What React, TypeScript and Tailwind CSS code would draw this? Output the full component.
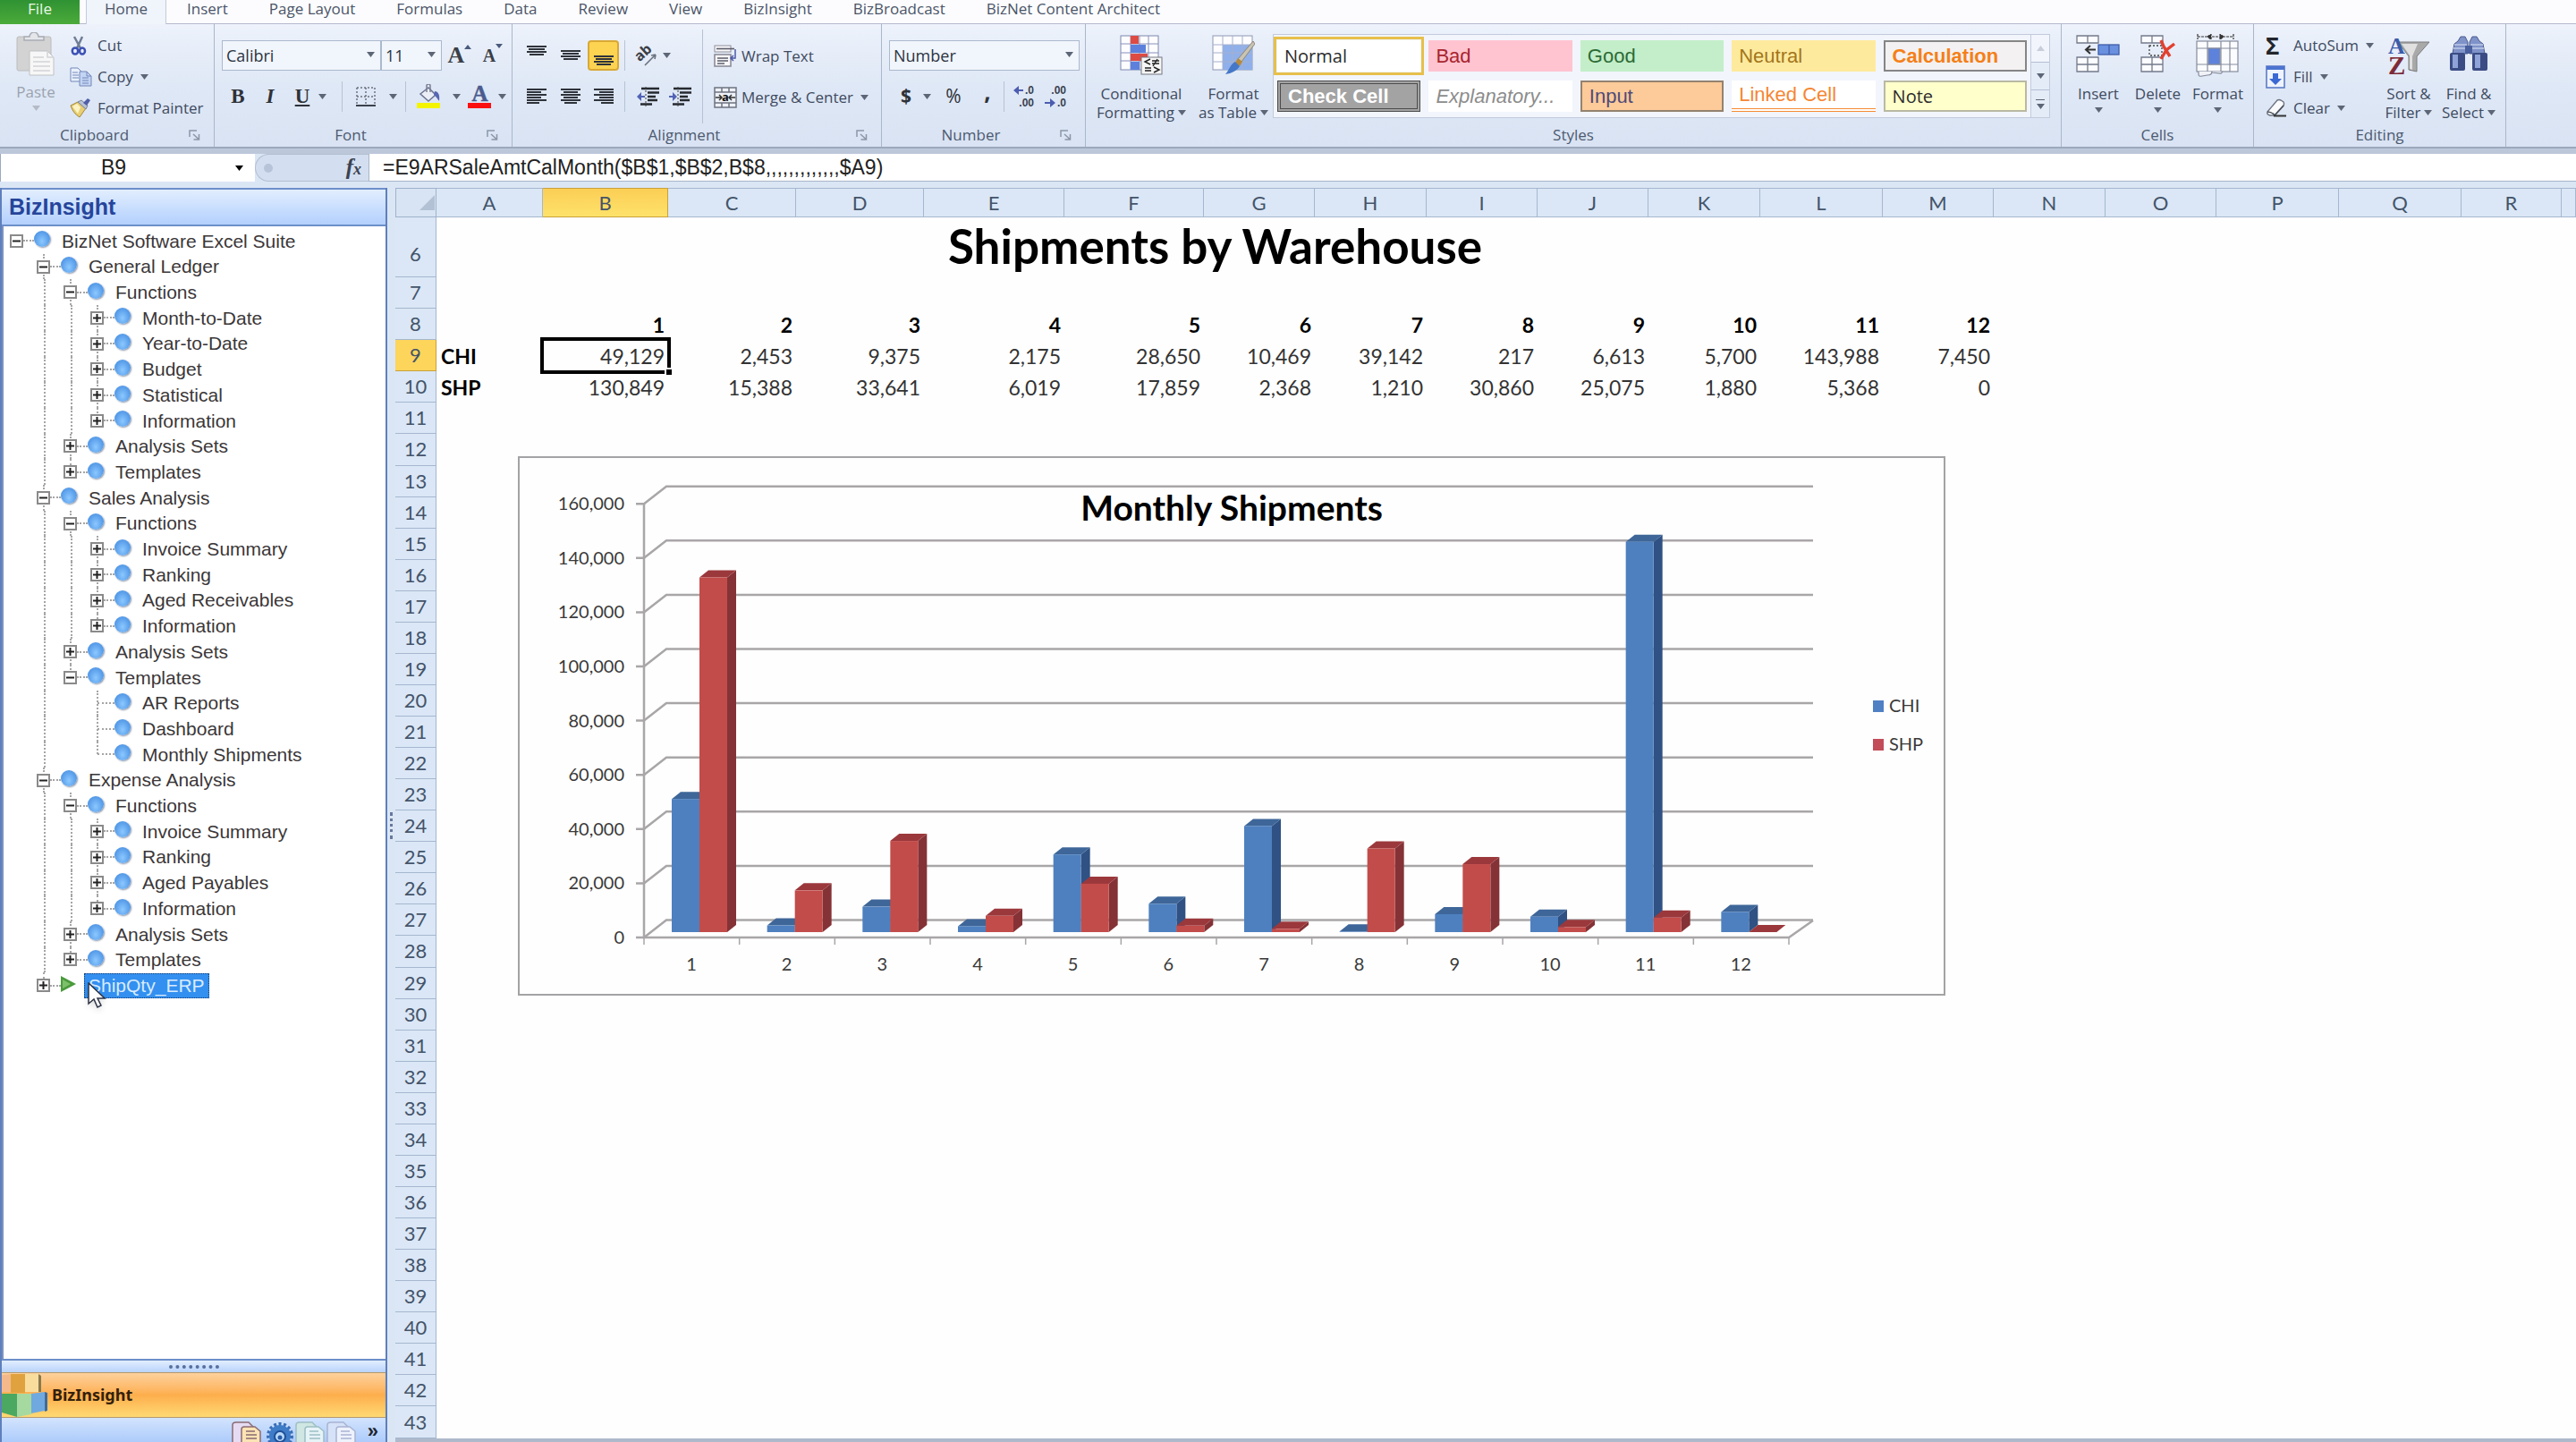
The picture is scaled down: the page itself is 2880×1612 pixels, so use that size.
import { Fragment, useState } from "react";
import type { ReactNode } from "react";

type TreeNode = {
  label: string;
  leaf?: boolean;
  script?: boolean;
  children?: TreeNode[];
};
type TreeRow = {
  node: TreeNode;
  level: number;
  rails: boolean[];
  last: boolean;
};

const tree: TreeNode = {
  label: "BizNet Software Excel Suite",
  children: [
    {
      label: "General Ledger",
      children: [
        {
          label: "Functions",
          children: [
            { label: "Month-to-Date" },
            { label: "Year-to-Date" },
            { label: "Budget" },
            { label: "Statistical" },
            { label: "Information" },
          ],
        },
        { label: "Analysis Sets" },
        { label: "Templates" },
      ],
    },
    {
      label: "Sales Analysis",
      children: [
        {
          label: "Functions",
          children: [
            { label: "Invoice Summary" },
            { label: "Ranking" },
            { label: "Aged Receivables" },
            { label: "Information" },
          ],
        },
        { label: "Analysis Sets" },
        {
          label: "Templates",
          children: [
            { label: "AR Reports", leaf: true },
            { label: "Dashboard", leaf: true },
            { label: "Monthly Shipments", leaf: true },
          ],
        },
      ],
    },
    {
      label: "Expense Analysis",
      children: [
        {
          label: "Functions",
          children: [
            { label: "Invoice Summary" },
            { label: "Ranking" },
            { label: "Aged Payables" },
            { label: "Information" },
          ],
        },
        { label: "Analysis Sets" },
        { label: "Templates" },
      ],
    },
    { label: "ShipQty_ERP", script: true },
  ],
};

function flatten(node: TreeNode, level = 0, rails: boolean[] = [], last = true): TreeRow[] {
  const kids = node.children ?? [];
  return [
    { node, level, rails, last },
    ...kids.flatMap((k, i) => flatten(k, level + 1, [...rails, !last], i === kids.length - 1)),
  ];
}

const chi = [49129, 2453, 9375, 2175, 28650, 10469, 39142, 217, 6613, 5700, 143988, 7450];
const shp = [130849, 15388, 33641, 6019, 17859, 2368, 1210, 30860, 25075, 1880, 5368, 0];

const columns = [
  { name: "A", width: "w-[119px]" },
  { name: "B", width: "w-[140px]" },
  { name: "C", width: "w-[143px]" },
  { name: "D", width: "w-[143px]" },
  { name: "E", width: "w-[157px]" },
  { name: "F", width: "w-[156px]" },
  { name: "G", width: "w-[124px]" },
  { name: "H", width: "w-[125px]" },
  { name: "I", width: "w-[124px]" },
  { name: "J", width: "w-[124px]" },
  { name: "K", width: "w-[125px]" },
  { name: "L", width: "w-[137px]" },
  { name: "M", width: "w-[124px]" },
  { name: "N", width: "w-[125px]" },
  { name: "O", width: "w-[124px]" },
  { name: "P", width: "w-[137px]" },
  { name: "Q", width: "w-[137px]" },
  { name: "R", width: "w-[112px]" },
  { name: "", width: "" },
];
const rowNumbers = Array.from({ length: 38 }, (_, i) => i + 6);

const fmt = (n: number) => n.toLocaleString("en-US");

/* ---------- small pieces ---------- */

function Arrow({ className = "text-[#5d6676]" }: { className?: string }) {
  return (
    <svg width="9" height="6" viewBox="0 0 9 6" className={className} aria-hidden="true">
      <path d="M0 0h9L4.5 6z" fill="currentColor" />
    </svg>
  );
}

function Divider() {
  return <span className="h-[34px] w-px bg-[#b6c2d4]" />;
}

function Group({ title, width, launcher, children }: { title: string; width: string; launcher?: boolean; children: ReactNode }) {
  return (
    <section className={`flex shrink-0 flex-col border-r border-[#aab7ca] ${width}`} aria-label={title}>
      <div className="flex h-[111px] px-2 pt-[6px]">{children}</div>
      <div className="flex h-[26px] items-center text-[17px] text-[#4d5a70]">
        <h2 className="flex-1 text-center">{title}</h2>
        {launcher && (
          <button className="w-[28px]" aria-label={`${title} settings`}>
            <svg width="13" height="12" viewBox="0 0 13 12" fill="none" stroke="#8b95a6" strokeWidth="1.5">
              <path d="M1 8V1h8M5 5l6 5.500M11.500 5v6H5.500" />
            </svg>
          </button>
        )}
      </div>
    </section>
  );
}

function BigButton({ icon, lines, width, muted, below }: { icon: ReactNode; lines: string[]; width: string; muted?: boolean; below?: boolean }) {
  return (
    <button className={`flex shrink-0 flex-col items-center text-[17px] leading-[21px] ${width} ${muted ? "text-[#9aa2ae]" : "text-[#3f4b5f]"}`}>
      <span className="flex h-[56px] items-start justify-center">{icon}</span>
      {lines.map((line, i) => (
        <span key={line} className="flex items-center gap-1 whitespace-nowrap">
          {line}
          {!below && i === lines.length - 1 && <Arrow />}
        </span>
      ))}
      {below && <span className="flex h-[16px] items-center"><Arrow className={muted ? "text-[#b4bbc6]" : "text-[#5d6676]"} /></span>}
    </button>
  );
}

function SmallButton({ icon, label, arrow }: { icon: ReactNode; label: string; arrow?: boolean }) {
  return (
    <button className="flex h-[35px] items-center text-[17px] whitespace-nowrap text-[#3f4b5f]">
      <span className="flex w-[31px] justify-start">{icon}</span>
      {label}
      {arrow && <span className="pl-2"><Arrow /></span>}
    </button>
  );
}

function Combo({ label, value, options, width }: { label: string; value: string; options: string[]; width: string }) {
  const [current, setCurrent] = useState(value);
  return (
    <div className={`relative ${width}`}>
      <select
        aria-label={label}
        value={current}
        onChange={(e) => setCurrent(e.target.value)}
        className="block h-[34px] w-full appearance-none border border-[#abb9ce] bg-[#f1f5fc] pl-1 text-[18px] text-[#2c3442]"
      >
        {options.map((o) => (
          <option key={o}>{o}</option>
        ))}
      </select>
      <span className="pointer-events-none absolute top-[13px] right-[7px]">
        <Arrow />
      </span>
    </div>
  );
}

/* ---------- icons ---------- */

function PasteIcon() {
  return (
    <svg width="44" height="50" viewBox="0 0 44 50" aria-hidden="true">
      <rect x="1" y="5" width="38" height="38" rx="2" fill="#d3d3d3" stroke="#bcbcbc" />
      <path d="M9 9V5h6a5 5 0 0 1 10 0h6v4z" fill="#e4e6ea" stroke="#a9adb5" strokeWidth="1.500" />
      <path d="M15 21h20l7 7v20H15z" fill="#f7f7f7" stroke="#bfc1c4" />
      <path d="M35 21v7h7M19 28h12M19 33h19M19 38h19M19 43h19" fill="none" stroke="#d2d4d6" strokeWidth="1.500" />
    </svg>
  );
}
function CutIcon() {
  return (
    <svg width="20" height="22" viewBox="0 0 20 22" fill="none" aria-hidden="true">
      <path d="M5 1l7 13M14 1L8 14" stroke="#6f7d95" strokeWidth="2.500" />
      <ellipse cx="6" cy="17" rx="3.200" ry="3.600" stroke="#3c50b4" strokeWidth="2.500" />
      <ellipse cx="14" cy="17" rx="3" ry="3.600" stroke="#3c50b4" strokeWidth="2.500" />
    </svg>
  );
}
function CopyIcon() {
  return (
    <svg width="25" height="22" viewBox="0 0 25 22" stroke="#7288b8" aria-hidden="true">
      <path d="M1 1h8l4 4v11H1z" fill="#e9f0fc" />
      <path d="M3 6h6M3 9h7M3 12h7" />
      <path d="M11 5h8l5 5v11H11z" fill="#c3d4f4" />
      <path d="M19 5v5h5M14 12h7M14 15h7M14 18h7" fill="none" />
    </svg>
  );
}
function PainterIcon() {
  return (
    <svg width="25" height="23" viewBox="0 0 25 23" aria-hidden="true">
      <path d="M1 9l8-4 9 7-7 10C6 19 3 15 1 9z" fill="#e8cf72" stroke="#a3873a" />
      <path d="M3 10l5-3 4 4-3 7z" fill="#fbf3c3" />
      <path d="M9 5l4-2 7 6-2 4z" fill="#b9c2d4" stroke="#77829a" />
      <path d="M15 6l5-5 3 2-4 6z" fill="#4f5fa8" />
    </svg>
  );
}
function AlignIcon({ kind }: { kind: "left" | "center" | "right" | "band" }) {
  const widths = kind === "band" ? [22, 18, 22, 16] : [22, 16, 22, 16, 22, 14];
  return (
    <svg width="22" height={widths.length * 3} viewBox={`0 0 22 ${widths.length * 3}`} fill="#2f333a" aria-hidden="true">
      {widths.map((w, i) => (
        <rect key={i} x={kind === "left" ? 0 : kind === "right" ? 22 - w : (22 - w) / 2} y={i * 3} width={w} height="2" />
      ))}
    </svg>
  );
}
function IndentIcon({ out }: { out?: boolean }) {
  return (
    <svg width="25" height="22" viewBox="0 0 25 22" aria-hidden="true">
      <path d="M5 2h20M12 6.500h13M12 11h9M12 15h11M4 19.500h13" stroke="#26292f" strokeWidth="2.600" />
      <path d="M10 0v22" stroke="#444" strokeDasharray="2 2" />
      <path d={out ? "M0 11l5-5v4h4v2H5v4z" : "M9 11L4 6v4H0v2h4v4z"} fill="#5263b5" />
    </svg>
  );
}
function OrientationIcon() {
  return (
    <svg width="26" height="24" viewBox="0 0 26 24" className="overflow-visible" aria-hidden="true">
      <text x="0" y="15" fontSize="16" fontWeight="700" fill="#3b3f47" transform="rotate(-42 8 12)">ab</text>
      <path d="M10 23L22 11M22 11l-5 1M22 11l-1 5" stroke="#6b7280" strokeWidth="1.600" fill="none" />
    </svg>
  );
}
function WrapIcon() {
  return (
    <svg width="26" height="25" viewBox="0 0 26 25" fill="none" aria-hidden="true">
      <rect x="1" y="1" width="18" height="7" fill="#f8f8fb" stroke="#8d8c99" />
      <path d="M3 4.500h20" stroke="#5b5c69" strokeWidth="1.600" />
      <rect x="1" y="11" width="18" height="13" fill="#f8f8fb" stroke="#8d8c99" strokeWidth="1.600" />
      <path d="M4 15h12M4 18h12M4 21h8" stroke="#5b5c69" strokeWidth="1.600" />
      <path d="M24 5v10h-4M22 12l-3 3 3 3" stroke="#4c5aa5" strokeWidth="1.500" />
    </svg>
  );
}
function MergeIcon() {
  return (
    <svg width="26" height="24" viewBox="0 0 26 24" aria-hidden="true">
      <rect x="1" y="1" width="24" height="22" fill="#eef1f7" stroke="#6d7380" strokeWidth="1.500" />
      <path d="M1 6h24M1 18h24M9 1v5M17 1v5M9 18v5M17 18v5" stroke="#6d7380" strokeWidth="1.500" />
      <path d="M2 12h6M18 12h6M6 9l3 3-3 3M20 9l-3 3 3 3" fill="none" stroke="#333" strokeWidth="1.500" />
      <text x="13" y="16" textAnchor="middle" fontSize="13" fontWeight="700" fill="#111">a</text>
    </svg>
  );
}
function BorderIcon() {
  return (
    <svg width="22" height="22" viewBox="0 0 22 22" aria-hidden="true">
      <path d="M1 1h20M1 1v20M21 1v20M11 1v20M1 11h20" stroke="#6c7280" strokeWidth="1.500" strokeDasharray="2 2" />
      <path d="M0 21h22" stroke="#3c414b" strokeWidth="2" />
    </svg>
  );
}
function BucketIcon() {
  return (
    <svg width="28" height="28" viewBox="0 0 28 28" aria-hidden="true">
      <path d="M4 11l9-7 8 8-8 7z" fill="#eceef6" stroke="#6b7391" strokeWidth="1.500" />
      <path d="M11 9V2a2 2 0 0 1 4 0v7" fill="none" stroke="#7a7f90" strokeWidth="1.500" />
      <path d="M20 8c4 0 6 4 5 11-2-2-3-5-6-7z" fill="#5767b3" />
      <rect x="0" y="21" width="26" height="6" fill="#f4f400" />
    </svg>
  );
}
function FontColorIcon() {
  return (
    <svg width="27" height="28" viewBox="0 0 27 28" className="overflow-visible" aria-hidden="true">
      <text x="13.500" y="19" textAnchor="middle" fontSize="25" fontFamily="Liberation Serif, serif" fill="#4b5b8f" stroke="#4b5b8f" strokeWidth="0.500">A</text>
      <rect x="0" y="21" width="26" height="6" fill="#fb0f0f" />
    </svg>
  );
}
function DecimalIcon({ more }: { more?: boolean }) {
  return (
    <svg width="26" height="30" viewBox="0 0 26 30" fontSize="12" fontWeight="700" fontFamily="Liberation Sans, sans-serif" fill="#3a4150" aria-hidden="true">
      <text x="25" y="12" textAnchor="end">{more ? ".0" : ".00"}</text>
      <text x="25" y="26" textAnchor="end">{more ? ".00" : ".0"}</text>
      {more ? (
        <path d="M2 8l6-5v4h5v2H8v4z" fill="#4c5db0" />
      ) : (
        <path d="M13 22l-6-5v4H1v2h6v4z" fill="#4c5db0" />
      )}
    </svg>
  );
}
function ConditionalIcon() {
  return (
    <svg width="48" height="46" viewBox="0 0 48 46" aria-hidden="true">
      <rect x="1" y="2" width="42" height="38" fill="#fdfdff" stroke="#7d88ad" />
      <path d="M12 2v38M22 2v38M32 2v38M1 11h42M1 21h42M1 30h42" stroke="#8790bb" />
      <rect x="12" y="2" width="9" height="9" fill="#dd4b43" />
      <rect x="12" y="12" width="17" height="9" fill="#5c80dc" />
      <rect x="12" y="22" width="19" height="8" fill="#dd4b43" />
      <rect x="12" y="31" width="10" height="9" fill="#5c80dc" />
      <rect x="24" y="26" width="23" height="19" fill="#f6f6f6" stroke="#73777f" />
      <path d="M34 28l-6 3 6 3M36 30h8M36 33h8M42 28l-5 8M28 38h7M28 41h7M38 37l6 3-6 3" fill="none" stroke="#222" strokeWidth="1.400" />
    </svg>
  );
}
function FormatTableIcon() {
  return (
    <svg width="48" height="46" viewBox="0 0 48 46" aria-hidden="true">
      <rect x="1" y="2" width="44" height="38" fill="#fdfdff" stroke="#8d97b3" />
      <rect x="12" y="12" width="33" height="28" fill="#8fb0ea" />
      <path d="M12 2v38M23 2v38M34 2v38M1 12h44M1 21h44M1 31h44" stroke="#a5b0cc" />
      <path d="M46 8l2 3-15 20-4-3z" fill="#c9c3b4" stroke="#8b8678" />
      <path d="M29 27l5 4-3 5-5-4z" fill="#b88a3c" />
      <path d="M26 31l5 5c-3 5-9 8-16 9 4-4 5-11 11-14z" fill="#4577c8" />
    </svg>
  );
}
function CellsInsertIcon() {
  return (
    <svg width="50" height="44" viewBox="0 0 50 44" stroke="#73798a" strokeWidth="1.300" aria-hidden="true">
      <path d="M1 2h24v8H1zM13 2v8M1 26h24v16H1zM13 26v16M1 34h24" fill="#fbfcff" />
      <rect x="25" y="12" width="23" height="11" fill="#6a90e0" stroke="#3e5da8" />
      <path d="M37 12v11" stroke="#3e5da8" />
      <path d="M22 17.500H12M16 13l-5 4.500 5 4.500" fill="none" stroke="#333" strokeWidth="2" />
    </svg>
  );
}
function CellsDeleteIcon() {
  return (
    <svg width="42" height="44" viewBox="0 0 42 44" stroke="#73798a" strokeWidth="1.300" aria-hidden="true">
      <path d="M2 2h24v8H2zM14 2v8M2 26h24v16H2zM14 26v16M2 34h24" fill="#fbfcff" />
      <path d="M11 13h14v11H11z" fill="none" stroke="#444" strokeDasharray="2 2" />
      <path d="M24 7l3 7 7 11M39 11L30 18l-6 10" fill="none" stroke="#e2402f" strokeWidth="3.400" />
    </svg>
  );
}
function CellsFormatIcon() {
  return (
    <svg width="50" height="48" viewBox="0 0 50 48" stroke="#858b9c" strokeWidth="1.200" aria-hidden="true">
      <path d="M2 3h40M2 0v6M42 0v6M13 3l4-3v6zM31 3l-4-3v6z" stroke="#333" strokeDasharray="3 1" fill="#333" />
      <rect x="1" y="8" width="46" height="34" fill="#fbfcff" />
      <path d="M13 8v34M28 8v34M38 8v34M1 16h46M1 34h46" />
      <rect x="14" y="16" width="13" height="18" fill="#5c82dc" />
      <path d="M3 42v3q0 3 4 2l6-1q5 0 5-4" fill="#f0f2f7" />
      <path d="M18 42v1l10 1 2-2" fill="#f0f2f7" />
    </svg>
  );
}
function FillIcon() {
  return (
    <svg width="22" height="26" viewBox="0 0 22 26" aria-hidden="true">
      <rect x="1" y="1" width="20" height="24" fill="#eef3fd" stroke="#5c7cc6" strokeWidth="1.600" />
      <rect x="1" y="1" width="20" height="4" fill="#4d74d0" />
      <path d="M8 9h6v6h4l-7 7-7-7h4z" fill="#3b68d4" />
    </svg>
  );
}
function EraserIcon() {
  return (
    <svg width="24" height="21" viewBox="0 0 24 21" aria-hidden="true">
      <path d="M2 15L13 2q2-1 4 0l3 2q1 2 0 4L10 19H5q-4-1-3-4z" fill="#fafbfd" stroke="#6d7483" strokeWidth="1.400" />
      <path d="M2 15q5 0 8 4L20 8" fill="none" stroke="#4b505b" strokeWidth="1.600" />
      <path d="M9 19.500h14" stroke="#333" strokeWidth="2" />
    </svg>
  );
}
function SortIcon() {
  return (
    <svg width="48" height="48" viewBox="0 0 48 48" className="overflow-visible" aria-hidden="true">
      <path d="M12 9h35L33 25v17l-9-2V25z" fill="#a9a9a9" stroke="#7c7c7c" />
      <path d="M16 11h18l-6 14v15l-3-1V24z" fill="#e0e0e0" />
      <text x="1" y="22" fontFamily="Liberation Serif, serif" fontSize="26" fontWeight="700" fill="#3c5cab">A</text>
      <text x="1" y="45" fontFamily="Liberation Serif, serif" fontSize="29" fontWeight="700" fill="#7d2b38">Z</text>
    </svg>
  );
}
function FindIcon() {
  return (
    <svg width="46" height="44" viewBox="0 0 46 44" aria-hidden="true">
      <path d="M14 3h5l3 6v13H5l2-11 4-3zM27 3h5l3 5 4 3 2 11H24V9z" fill="#7f93c9" stroke="#4a5a8f" />
      <path d="M7 12h14M25 12h14M6 16h15M25 16h15" stroke="#c0cae8" strokeWidth="1.500" />
      <rect x="19" y="13" width="8" height="9" fill="#4a5f9d" />
      <rect x="2" y="21" width="17" height="20" rx="2" fill="#3b4c84" />
      <rect x="27" y="21" width="17" height="20" rx="2" fill="#3b4c84" />
      <path d="M5 23h6v15H5zM30 23h6v15h-6z" fill="#8fa3d8" />
    </svg>
  );
}
function ShelfIcon() {
  return (
    <svg width="52" height="50" viewBox="0 0 52 50" aria-hidden="true">
      <path d="M0 2l10-1v20H0z" fill="#f4b98a" />
      <path d="M10 1h16v21H10z" fill="#e0a23e" />
      <path d="M26 1h15v20H26z" fill="#f8dd9d" />
      <path d="M41 1l3 2v18h-3z" fill="#8a7a4e" />
      <path d="M0 23h17v26L0 44z" fill="#4ba860" />
      <path d="M17 23h16v23l-16 3z" fill="#a6d9a0" />
      <path d="M33 23l15-2v21l-15 3z" fill="#6fa9e0" />
      <path d="M48 21l3 1v20l-3 1z" fill="#3e6c9c" />
    </svg>
  );
}
function PagesIcon({ back, front, line }: { back: string; front: string; line: string }) {
  return (
    <svg width="35" height="24" viewBox="0 0 35 24" stroke={line} strokeWidth="1.500" aria-hidden="true">
      <path d="M2 24V5q0-3 4-3h14l5 5v17" fill={back} />
      <path d="M12 24V10q0-3 3-3h12l6 5v12" fill={front} />
      <path d="M17 12h10M17 16h12M17 20h12" />
    </svg>
  );
}
function GearIcon() {
  return (
    <svg width="32" height="24" viewBox="0 0 32 24" aria-hidden="true">
      <circle cx="16" cy="17" r="13" fill="none" stroke="#3b6db5" strokeWidth="4" strokeDasharray="3 2.400" />
      <circle cx="16" cy="17" r="12" fill="#3f7cc8" />
      <circle cx="16" cy="18" r="6" fill="#b9d8f8" stroke="#1f4f98" strokeWidth="2" />
      <circle cx="16" cy="19" r="2.500" fill="#275ca8" />
    </svg>
  );
}

/* ---------- ribbon ---------- */

const tabs = ["Insert", "Page Layout", "Formulas", "Data", "Review", "View", "BizInsight", "BizBroadcast", "BizNet Content Architect"];

const cellStyles = [
  { name: "Normal", look: "bg-white font-['Open_Sans',sans-serif] text-[20px] text-[#2b2b2b] outline-3 outline-offset-1 outline-[#e7c04b]" },
  { name: "Bad", look: "bg-[#ffc4d0] text-[22px] text-[#a8252f]" },
  { name: "Good", look: "bg-[#c3eec9] text-[22px] text-[#2c6b36]" },
  { name: "Neutral", look: "bg-[#feea9d] text-[22px] text-[#a3761c]" },
  { name: "Calculation", look: "border-2 border-[#858585] bg-[#f3f1f2] text-[22px] font-bold text-[#f57f17]" },
  { name: "Check Cell", look: "border-4 border-double border-[#4c4c4c] bg-[#a3a3a3] text-[22px] font-bold text-white" },
  { name: "Explanatory...", look: "bg-white text-[22px] text-[#8c8c8c] italic" },
  { name: "Input", look: "border-2 border-[#93826f] bg-[#fdca99] text-[22px] text-[#4f4b78]" },
  { name: "Linked Cell", look: "border-b-4 border-double border-[#f58a32] bg-white text-[22px] text-[#f58632]" },
  { name: "Note", look: "border-2 border-[#b9b9a4] bg-[#ffffcb] font-['Open_Sans',sans-serif] text-[20px] text-[#2b2b2b]" },
];

function Ribbon() {
  return (
    <header className="shrink-0">
      <nav className="flex h-[27px] items-start border-b border-[#b5b9cc] bg-[#fcfcfe] text-[17px] leading-[20px] text-[#4b5568]">
        <button className="h-[27px] w-[89px] bg-linear-to-b from-[#2f9233] to-[#4bab3a] pb-[7px] text-[#e9f8e4]">File</button>
        <button className="ml-[7px] h-[27px] w-[90px] border-x border-[#c3cbdb] bg-[#f0f4fb] pb-[7px]">Home</button>
        {tabs.map((t) => (
          <button key={t} className="px-[23px] whitespace-nowrap">{t}</button>
        ))}
      </nav>

      <div className="flex h-[137px] bg-linear-to-b from-[#edf2fb] via-[#dfe8f6] to-[#d9e3f3]">
        <Group title="Clipboard" width="w-[240px]" launcher>
          <div className="pt-[3px]">
            <BigButton icon={<PasteIcon />} lines={["Paste"]} width="w-[64px]" muted below />
          </div>
          <div className="flex flex-col pl-[6px]">
            <SmallButton icon={<CutIcon />} label="Cut" />
            <SmallButton icon={<CopyIcon />} label="Copy" arrow />
            <SmallButton icon={<PainterIcon />} label="Format Painter" />
          </div>
        </Group>

        <Group title="Font" width="w-[333px]" launcher>
          <div className="flex flex-col gap-3 pt-3">
            <div className="flex h-[34px] items-center">
              <Combo label="Font name" value="Calibri" options={["Calibri", "Arial"]} width="w-[178px]" />
              <Combo label="Font size" value="11" options={["10", "11", "12"]} width="w-[68px]" />
              <button className="flex w-[40px] items-start justify-center font-['Liberation_Serif',serif] text-[26px] leading-[34px] font-bold text-[#3b3f47]" aria-label="Grow font">
                A<svg width="8" height="14" viewBox="0 0 8 14"><path d="M0 10l4-5 4 5z" fill="#4a5a7c" /></svg>
              </button>
              <button className="flex w-[34px] items-start justify-center font-['Liberation_Serif',serif] text-[20px] leading-[38px] font-bold text-[#3b3f47]" aria-label="Shrink font">
                A<svg width="8" height="14" viewBox="0 0 8 14"><path d="M0 6h8l-4 5z" fill="#4a5a7c" /></svg>
              </button>
            </div>
            <div className="flex h-[34px] items-center font-['Liberation_Serif',serif] text-[23px] font-bold text-[#2e3238]">
              <button className="w-[36px]">B</button>
              <button className="w-[36px] italic">I</button>
              <button className="w-[36px] underline">U</button>
              <button className="w-[18px]" aria-label="Underline styles"><Arrow /></button>
              <span className="w-2" />
              <Divider />
              <button className="flex w-[52px] justify-center" aria-label="Borders"><BorderIcon /></button>
              <button className="w-[18px]" aria-label="Border styles"><Arrow /></button>
              <Divider />
              <button className="flex w-[52px] justify-center" aria-label="Fill color"><BucketIcon /></button>
              <button className="w-[9px]" aria-label="Fill colors"><Arrow /></button>
              <button className="flex w-[42px] justify-center" aria-label="Font color"><FontColorIcon /></button>
              <button className="w-[9px]" aria-label="Font colors"><Arrow /></button>
            </div>
          </div>
        </Group>

        <Group title="Alignment" width="w-[413px]" launcher>
          <div className="flex flex-col gap-3 pt-3">
            <div className="flex h-[34px] items-center">
              <button className="flex h-[34px] w-[38px] justify-center pt-[6px]" aria-label="Top align"><AlignIcon kind="band" /></button>
              <button className="flex h-[34px] w-[38px] items-center justify-center" aria-label="Middle align"><AlignIcon kind="band" /></button>
              <button className="flex h-[34px] w-[35px] items-end justify-center rounded border-2 border-[#d9a935] bg-[#fdd352] pb-[3px]" aria-label="Bottom align"><AlignIcon kind="band" /></button>
              <span className="w-[6px]" />
              <Divider />
              <button className="flex w-[38px] justify-end" aria-label="Orientation"><OrientationIcon /></button>
              <button className="w-[18px] pl-1" aria-label="Orientation options"><Arrow /></button>
            </div>
            <div className="flex h-[34px] items-center">
              <button className="flex w-[38px] justify-center" aria-label="Align left"><AlignIcon kind="left" /></button>
              <button className="flex w-[38px] justify-center" aria-label="Center"><AlignIcon kind="center" /></button>
              <button className="flex w-[35px] justify-center" aria-label="Align right"><AlignIcon kind="right" /></button>
              <span className="w-[6px]" />
              <Divider />
              <button className="flex w-[38px] justify-end" aria-label="Decrease indent"><IndentIcon out /></button>
              <button className="flex w-[36px] justify-end" aria-label="Increase indent"><IndentIcon /></button>
            </div>
          </div>
          <div className="ml-[12px] flex flex-1 flex-col gap-[11px] border-l border-[#b6c2d4] pt-3 pl-3 text-[#3f4b5f]">
            <SmallButton icon={<WrapIcon />} label="Wrap Text" />
            <SmallButton icon={<MergeIcon />} label="Merge & Center" arrow />
          </div>
        </Group>

        <Group title="Number" width="w-[228px]" launcher>
          <div className="flex flex-col gap-3 pt-3">
            <Combo label="Number format" value="Number" options={["General", "Number"]} width="w-[213px]" />
            <div className="flex h-[34px] items-center text-[21px] text-[#2e3238]">
              <button className="w-[38px] font-bold">$</button>
              <button className="w-[14px]" aria-label="Currencies"><Arrow /></button>
              <button className="w-[40px]">%</button>
              <button className="w-[36px] pb-3 text-[26px] leading-[22px] font-bold">,</button>
              <Divider />
              <button className="flex w-[42px] justify-center" aria-label="Increase decimal"><DecimalIcon more /></button>
              <button className="flex w-[30px] justify-center" aria-label="Decrease decimal"><DecimalIcon /></button>
            </div>
          </div>
        </Group>

        <Group title="Styles" width="w-[1091px]">
          <div className="flex gap-3 pt-[5px]">
            <BigButton icon={<ConditionalIcon />} lines={["Conditional", "Formatting"]} width="w-[108px]" />
            <BigButton icon={<FormatTableIcon />} lines={["Format", "as Table"]} width="w-[74px]" />
          </div>
          <div className="mt-[5px] ml-[7px] flex h-[94px] flex-1 border border-[#c2cbdb] bg-[#f2f5fc]">
            <div className="grid flex-1 grid-cols-5 gap-x-[9px] gap-y-[10px] px-1 py-[6px] font-['Liberation_Sans',sans-serif]">
              {cellStyles.map((s) => (
                <button key={s.name} className={`h-[35px] truncate px-[8px] text-left leading-[26px] ${s.look}`}>
                  {s.name}
                </button>
              ))}
            </div>
            <div className="flex w-[21px] flex-col border-l border-[#c2cbdb]">
              <button className="flex flex-1 items-center justify-center" aria-label="Scroll up">
                <svg width="9" height="6" viewBox="0 0 9 6"><path d="M0 6h9L4.500 0z" fill="#c8ced9" /></svg>
              </button>
              <button className="flex flex-1 items-center justify-center border-y border-[#b4bfd1] bg-[#e4ecf8]" aria-label="Scroll down"><Arrow /></button>
              <button className="flex flex-1 flex-col items-center justify-center gap-1 bg-[#e4ecf8]" aria-label="More styles">
                <span className="h-px w-[10px] bg-[#5d6676]" />
                <Arrow />
              </button>
            </div>
          </div>
          <span className="w-[4px]" />
        </Group>

        <Group title="Cells" width="w-[215px]">
          <div className="flex pt-[5px]">
            <BigButton icon={<CellsInsertIcon />} lines={["Insert"]} width="w-[66px]" below />
            <BigButton icon={<CellsDeleteIcon />} lines={["Delete"]} width="w-[67px]" below />
            <BigButton icon={<CellsFormatIcon />} lines={["Format"]} width="w-[67px]" below />
          </div>
        </Group>

        <Group title="Editing" width="w-[282px]">
          <div className="flex w-[132px] shrink-0 flex-col pl-[5px]">
            <SmallButton icon={<span className="text-[26px] leading-[30px] font-bold text-[#22252b]">Σ</span>} label="AutoSum" arrow />
            <SmallButton icon={<FillIcon />} label="Fill" arrow />
            <SmallButton icon={<EraserIcon />} label="Clear" arrow />
          </div>
          <div className="flex pt-[5px]">
            <BigButton icon={<SortIcon />} lines={["Sort &", "Filter"]} width="w-[66px]" />
            <BigButton icon={<FindIcon />} lines={["Find &", "Select"]} width="w-[68px]" />
          </div>
        </Group>
      </div>
      <div className="h-2 border-t-2 border-[#9ba8bd] bg-[#bcc7da]" />
    </header>
  );
}

function FormulaBar() {
  return (
    <div className="flex h-[38px] shrink-0 border-b-7 border-[#dbe6f5] bg-[#dbe6f5] font-['Liberation_Sans',sans-serif] text-[#222]">
      <div className="flex w-[285px] items-center border-l border-[#9ba8bd] bg-white">
        <input aria-label="Name box" defaultValue="B9" className="w-[252px] text-center text-[23px]" />
        <button className="pl-[10px]" aria-label="Names"><Arrow className="text-black" /></button>
      </div>
      <div className="flex w-[127px] items-center justify-between rounded-l-full border-y border-l border-[#b3bfd2] bg-[#d3dff0] pr-[8px] pl-[9px]">
        <span className="h-[10px] w-[10px] rounded-full bg-[#b6c3d8]" />
        <button className="font-['Liberation_Serif',serif] text-[25px] leading-[30px] font-bold text-[#3b4250] italic">
          f<span className="text-[18px]">x</span>
        </button>
      </div>
      <input
        aria-label="Formula"
        defaultValue="=E9ARSaleAmtCalMonth($B$1,$B$2,B$8,,,,,,,,,,,,,$A9)"
        className="flex-1 border-b border-l border-[#a9b6ca] bg-white pl-[15px] text-[23px]"
      />
    </div>
  );
}

/* ---------- left pane ---------- */

function TreeItem({ row }: { row: TreeRow }) {
  const { node, level, rails, last } = row;
  const open = !!node.children;
  return (
    <li role="treeitem" aria-level={level + 1} aria-expanded={open} className="flex">
      {rails.map((on, i) => (
        <span key={i} className="flex w-[30px] justify-end">
          <span className={`w-[15px] ${on ? "border-l-2 border-dotted border-[#a5a5a5]" : ""}`} />
        </span>
      ))}
      <span className="relative flex w-[34px] items-center pl-[7px]">
        {level > 0 && (
          <span className={`absolute top-0 left-[14px] border-l-2 border-dotted border-[#a5a5a5] ${last ? "h-1/2" : "h-full"}`} />
        )}
        {node.leaf ? (
          <span className="ml-[8px] flex-1 border-t-2 border-dotted border-[#a5a5a5]" />
        ) : (
          <>
            <button
              aria-label={open ? "Collapse" : "Expand"}
              className="relative flex h-[15px] w-[15px] items-center justify-center border-2 border-[#8a8a8a] bg-white"
            >
              <svg width="9" height="9" viewBox="0 0 9 9" stroke="#222" strokeWidth="2">
                <path d={open ? "M0 4.500h9" : "M0 4.500h9M4.500 0v9"} />
              </svg>
            </button>
            <span className="flex-1 border-t-2 border-dotted border-[#a5a5a5]" />
          </>
        )}
      </span>
      <span className="flex w-[26px] items-center pb-[4px]">
        {node.script ? (
          <svg width="17" height="18" viewBox="0 0 17 18" aria-hidden="true">
            <path d="M0 0l17 9-17 9z" fill="#4a9a3c" />
            <path d="M2 4l9 5-9 5z" fill="#7cc069" />
          </svg>
        ) : (
          <span className="h-[18px] w-[18px] rounded-full bg-radial-[at_50%_65%] from-[#8cc8ff] to-[#3a84dd] shadow-[1px_1px_2px_#8894a8]" />
        )}
      </span>
      {node.script ? (
        <span className="relative flex items-center">
          <span className="border border-dotted border-[#163a70] bg-[#3390f0] px-1 leading-[26px] text-[#d9ebff]">{node.label}</span>
          <svg width="24" height="32" viewBox="0 0 24 32" className="absolute top-[11px] left-[4px] drop-shadow-md" aria-hidden="true">
            <path d="M1 1v23l6-5 4 9 4-2-4-8h8z" fill="#fff" stroke="#2d3345" strokeWidth="1.500" />
          </svg>
        </span>
      ) : (
        <span className="flex items-center pl-[5px] whitespace-nowrap">{node.label}</span>
      )}
    </li>
  );
}

function SidePane() {
  const rows = flatten(tree);
  return (
    <aside className="flex w-[433px] shrink-0 flex-col border-r-2 border-l-2 border-[#5f7fbd] bg-[#d5e4fb] font-['Liberation_Sans',sans-serif]">
      <h1 className="flex h-[43px] shrink-0 items-center border-y-2 border-[#6d8fc9] bg-linear-to-b from-[#e2eefe] to-[#b3d0fd] pl-2 text-[25px] font-bold text-[#26459b]">
        BizInsight
      </h1>
      <div className="flex-1 border-l-2 border-[#7b93bf] bg-white text-[21px] text-[#3b3738]">
        <ul role="tree" className="grid h-[863px] auto-rows-fr pt-[2px]">
          {rows.map((r, i) => (
            <TreeItem key={i} row={r} />
          ))}
        </ul>
      </div>
      <div className="flex h-[15px] shrink-0 items-center justify-center border-t-2 border-[#6d8fc9] bg-linear-to-b from-[#e2eefe] to-[#b9d3fb]">
        <span className="w-[56px] border-t-4 border-dotted border-[#566f9f]" />
      </div>
      <button className="flex h-[51px] shrink-0 items-center gap-1 border-y border-[#b5986a] bg-linear-to-b from-[#fdd19c] via-[#fdae4c] to-[#fed973] font-['Noto_Sans',sans-serif] text-[18px] font-bold text-[#33200c]">
        <ShelfIcon />
        BizInsight
      </button>
      <div className="flex h-[27px] shrink-0 items-end justify-end overflow-hidden bg-linear-to-b from-[#d3e4fd] to-[#accbfb] pr-2">
        <button aria-label="Documents"><PagesIcon back="#e5dcf3" front="#fbe3b4" line="#8a6b72" /></button>
        <button className="pl-1" aria-label="Options"><GearIcon /></button>
        <button aria-label="Reports"><PagesIcon back="#cfe6e2" front="#e6f3f7" line="#9dbfc4" /></button>
        <button aria-label="Notes"><PagesIcon back="#d5e2f8" front="#eef2fc" line="#a9b3d2" /></button>
        <button className="pl-3 text-[22px] leading-[24px] font-bold text-[#1c2430]">»</button>
      </div>
    </aside>
  );
}

/* ---------- chart ---------- */

const STEP = 1280 / 12;
const BASE = 531;

function Bar({ x, value, front, side, top }: { x: number; value: number; front: string; side: string; top: string }) {
  const h = (value * 60.6) / 20000;
  const y = BASE - h;
  return (
    <g>
      <path d={`M${x + 31} ${y}l10 -8v${h}l-10 8z`} fill={side} />
      <path d={`M${x} ${y}l10 -8h31l-10 8z`} fill={top} />
      <rect x={x} y={y} width="31" height={h} fill={front} />
    </g>
  );
}

function ShipmentsChart() {
  const ticks = [0, 1, 2, 3, 4, 5, 6, 7, 8];
  return (
    <figure className="absolute top-[300px] left-[137px] border-2 border-[#a3a3a6] bg-[#fefefe]">
      <svg width="1592" height="599" viewBox="1 1 1592 599" fontSize="20" fill="#3a3a3a" className="block">
        <g fill="none" stroke="#a9a6a8" strokeWidth="2.500">
          {ticks.map((t) => {
            const y = 537 - t * 60.6;
            return <path key={t} d={`M131 ${y}h9l25 -19.500H1447`} />;
          })}
          <path d="M140 52V537H1420L1447 518" />
          {Array.from({ length: 13 }, (_, i) => (
            <path key={i} d={`M${140 + i * STEP} 537v8`} strokeWidth="1.500" />
          ))}
        </g>
        {chi.map((v, i) => (
          <Fragment key={i}>
            <Bar x={171 + i * STEP} value={v} front="#4e80bf" side="#2f5184" top="#3e6699" />
            <Bar x={202 + i * STEP} value={shp[i]} front="#c24c4a" side="#843236" top="#9b383c" />
          </Fragment>
        ))}
        {ticks.map((t) => (
          <text key={t} x="118" y={544 - t * 60.6} textAnchor="end">{fmt(t * 20000)}</text>
        ))}
        {chi.map((_, i) => (
          <text key={i} x={193 + i * STEP} y="574" textAnchor="middle">{i + 1}</text>
        ))}
        <text x="797" y="71" textAnchor="middle" fontSize="39" fontWeight="700" fill="#000">Monthly Shipments</text>
        <rect x="1514" y="272" width="12" height="13" fill="#5080c4" />
        <text x="1532" y="285">CHI</text>
        <rect x="1514" y="315" width="12" height="13" fill="#c24c58" />
        <text x="1532" y="328">SHP</text>
      </svg>
    </figure>
  );
}

/* ---------- sheet ---------- */

function SheetCells({ row }: { row: number }) {
  if (row === 6) {
    return (
      <>
        <td colSpan={13} className="h-[67px] text-center align-top text-[53px] leading-[64px] font-bold text-black">Shipments by Warehouse</td>
        <td colSpan={6} />
      </>
    );
  }
  if (row < 8 || row > 10) return <td colSpan={19} />;
  const values = row === 9 ? chi : shp;
  return (
    <>
      <td className="pl-[5px] font-bold text-black">{row === 9 ? "CHI" : row === 10 ? "SHP" : ""}</td>
      {values.map((v, i) => (
        <td key={i} className={`pr-1 text-right ${row === 8 ? "font-bold text-black" : "text-[#333]"} ${row === 9 && i === 0 ? "relative outline-4 -outline-offset-1 outline-black" : ""}`}>
          {row === 8 ? i + 1 : fmt(v)}
          {row === 9 && i === 0 && <span className="absolute -right-1 -bottom-1 h-2 w-2 border-t-2 border-l-2 border-white bg-black" />}
        </td>
      ))}
      <td colSpan={6} />
    </>
  );
}

function Sheet() {
  return (
    <div className="relative min-w-0 flex-1 overflow-hidden border-b-4 border-[#aeb9cb] bg-[#fefefe] font-[Lato,sans-serif]">
      <table className="h-full w-full table-fixed border-separate border-spacing-0 text-[23px] leading-[30px]">
        <colgroup>
          <col className="w-[46px]" />
          {columns.map((c, i) => (
            <col key={i} className={c.width} />
          ))}
        </colgroup>
        <thead>
          <tr className="h-[33px] text-[22px] text-[#44546a]">
            <th className="border border-[#9fb2cc] bg-[#d8e4f3] p-0">
              <svg width="18" height="18" viewBox="0 0 18 18" className="ml-auto" aria-label="Select all"><path d="M17 0v17H0z" fill="#b3c1d4" /></svg>
            </th>
            {columns.map((c, i) => (
              <th
                key={i}
                scope="col"
                className={`border-t border-r border-b p-0 font-normal ${c.name === "B" ? "border-[#c9a13a] bg-linear-to-b from-[#fbce55] to-[#fee26a]" : "border-[#a5b7cf] bg-[#dbe7f6]"}`}
              >
                {c.name}
              </th>
            ))}
          </tr>
        </thead>
        <tbody>
          {rowNumbers.map((n) => (
            <tr key={n} className={n === 6 ? "h-[67px]" : "h-[35px]"}>
              <th
                scope="row"
                className={`border-r border-b p-0 text-[22px] font-normal ${n === 6 ? "pt-4" : ""} ${n === 9 ? "border-[#c9a13a] bg-[#fdd55b]" : "border-[#a5b7cf] bg-[#dbe7f6]"} text-[#44546a]`}
              >
                {n}
              </th>
              <SheetCells row={n} />
            </tr>
          ))}
        </tbody>
      </table>
      <ShipmentsChart />
    </div>
  );
}

export default function App() {
  return (
    <div className="flex h-screen flex-col overflow-hidden bg-[#dbe6f5] font-['Open_Sans',sans-serif]">
      <Ribbon />
      <FormulaBar />
      <main className="flex min-h-0 flex-1">
        <SidePane />
        <div className="flex w-[9px] shrink-0 items-center justify-center pt-6">
          <span className="h-[30px] border-l-3 border-dotted border-[#66789c]" />
        </div>
        <Sheet />
      </main>
    </div>
  );
}
